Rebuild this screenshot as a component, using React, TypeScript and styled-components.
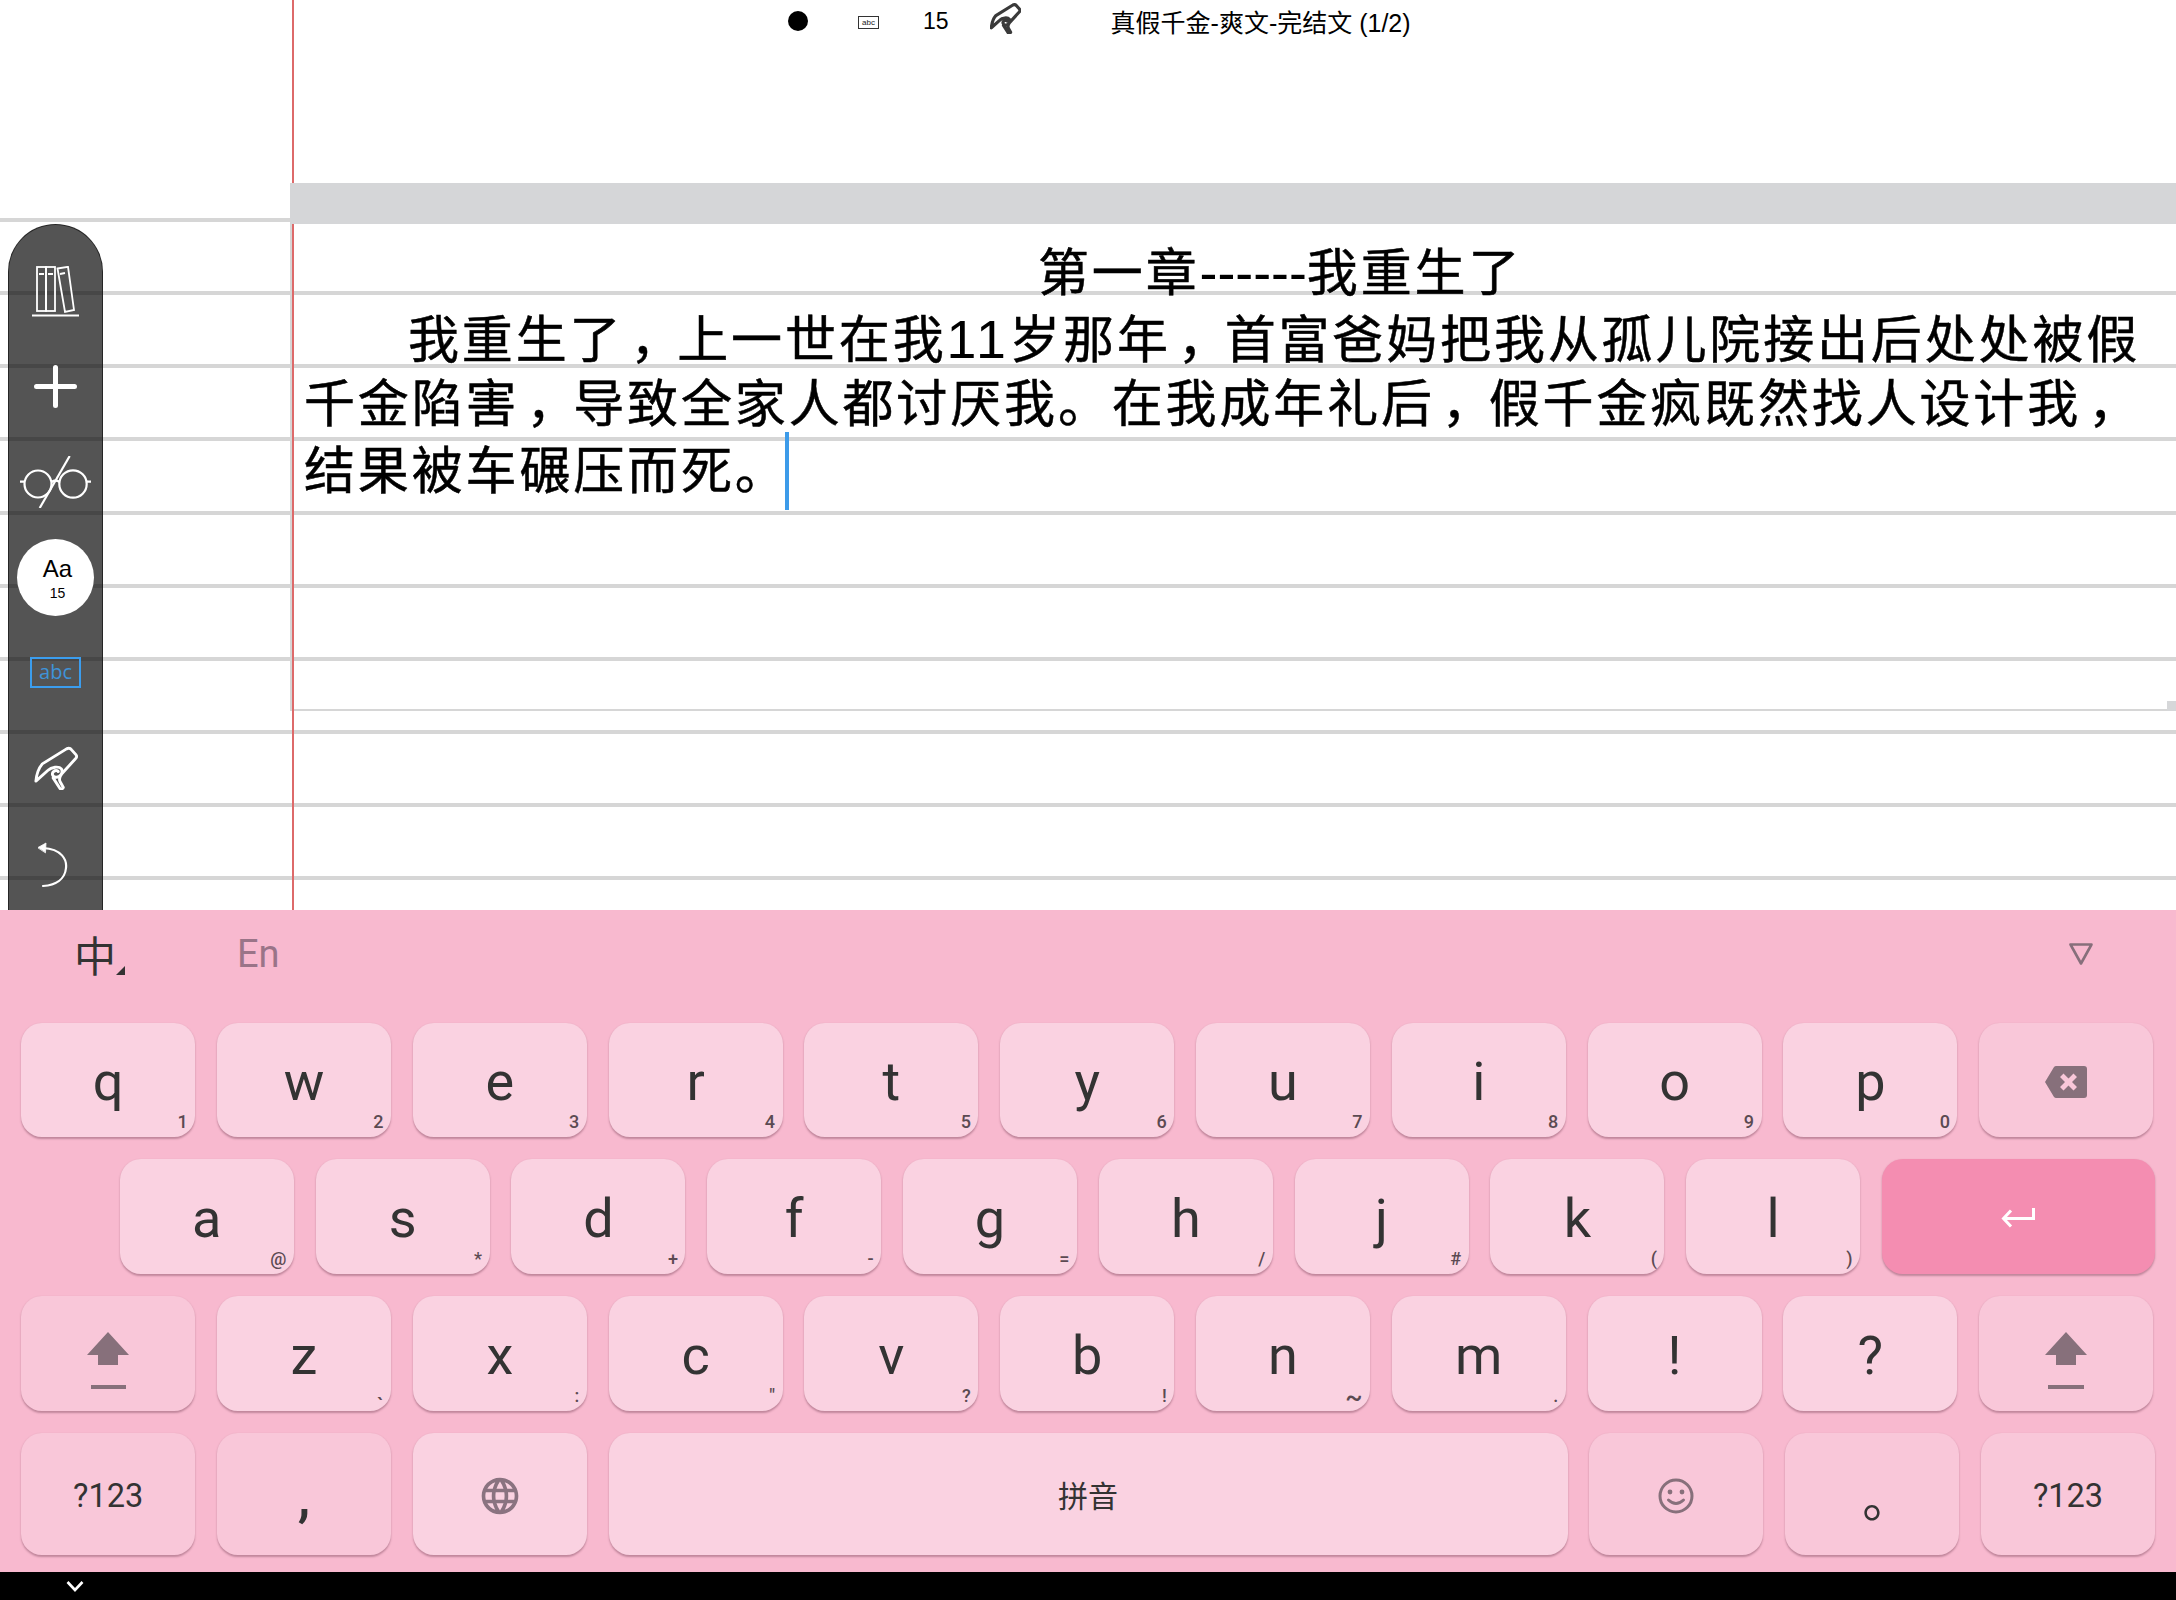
import React from "react";
import styled, { createGlobalStyle } from "styled-components";
import { MdLanguage } from "react-icons/md";

const Global = createGlobalStyle`
  html, body { margin: 0; padding: 0; background: #fff; }
  #root { width: 2176px; height: 1600px; overflow: hidden; }
`;

const Page = styled.div`
  width: 2176px;
  height: 1600px;
  display: flex;
  flex-direction: column;
  overflow: hidden;
`;

/* ---------- note pad ---------- */
const NotePad = styled.div`
  height: 910px;
  flex: none;
  display: grid;
  grid-template-columns: 292px 1fr;
  background-color: #fff;
  background-image: repeating-linear-gradient(
    to bottom,
    #d6d6d6 0,
    #d6d6d6 4px,
    transparent 4px,
    transparent 73.15px
  );
  background-position: 0 217.5px;
  background-repeat: no-repeat;
  background-size: 100% 700px;
`;

const LeftRail = styled.div`
  padding: 224px 0 0 8px;
`;

const Toolbar = styled.div`
  width: 95px;
  height: 686px;
  box-sizing: border-box;
  padding-top: 18.5px;
  background: rgba(0, 0, 0, 0.67);
  border: 1.5px solid rgba(30, 30, 30, 0.85);
  border-bottom: none;
  border-radius: 48px 48px 0 0;
  display: flex;
  flex-direction: column;
  align-items: center;
`;

const ToolSlot = styled.div`
  height: 95.3px;
  flex: none;
  display: flex;
  align-items: center;
  justify-content: center;
`;

const FontBadge = styled.div`
  width: 77px;
  height: 77px;
  border-radius: 50%;
  background: #fff;
  color: #000;
  font-family: "Liberation Sans", Arial, sans-serif;
  display: flex;
  flex-direction: column;
  align-items: center;
  justify-content: center;
  padding: 2px 0 0 4px;
  box-sizing: border-box;
`;

const BadgeTitle = styled.span`
  font-size: 24px;
  line-height: 26px;
`;

const BadgeSize = styled.span`
  font-size: 14px;
  line-height: 16px;
  margin-top: 3px;
`;

const AbcBox = styled.div`
  width: 51px;
  height: 31px;
  box-sizing: border-box;
  border: 2px solid #3b9dee;
  color: #3f93d8;
  font-family: "Open Sans", "Liberation Sans", sans-serif;
  font-size: 20px;
  line-height: 26px;
  text-align: center;
`;

const Sheet = styled.div`
  border-left: 2px solid #dd6a6a;
  display: flex;
  flex-direction: column;
  min-width: 0;
`;

const TopRow = styled.div`
  height: 44px;
  padding-left: 494px;
  display: flex;
  align-items: center;
  font-family: "Liberation Sans", "Noto Sans CJK SC", sans-serif;
  color: #000;
`;

const TopSpacer = styled.div`
  height: 139px;
`;

const Dot = styled.div`
  width: 20px;
  height: 20px;
  border-radius: 50%;
  background: #000;
  margin-top: -2px;
`;

const MiniAbc = styled.div`
  width: 21px;
  height: 13px;
  margin-left: 50px;
  box-sizing: border-box;
  border: 1px solid #333;
  font-size: 8px;
  line-height: 11px;
  text-align: center;
  color: #222;
`;

const TopNumber = styled.span`
  margin-left: 44px;
  font-size: 23px;
  margin-top: -1px;
`;

const TopHand = styled.svg`
  width: 31px;
  height: 31px;
  margin: -7px 0 0 41px;
  flex: none;
`;

const TopTitle = styled.span`
  margin-left: 90px;
  font-size: 25px;
  white-space: nowrap;
  margin-top: -3px;
`;

const Band = styled.div`
  height: 41px;
  margin-left: -4px;
  background: #d5d6d8;
  flex: none;
`;

const Paper = styled.div`
  position: relative;
  height: 487px;
  box-sizing: border-box;
  padding: 15px 0 0 10px;
  border-bottom: 2px solid #d6d6d6;
  font-family: "Liberation Sans", "Noto Sans CJK SC", sans-serif;
  font-size: 51px;
  letter-spacing: 2.85px;
  -webkit-text-stroke: 0.5px #000;
  color: #000;
  &::before {
    content: "";
    position: absolute;
    left: -4px;
    top: 0;
    bottom: -2px;
    width: 2px;
    background: #d6d6d6;
  }
`;

const TextLine = styled.div<{ $indent?: number }>`
  height: 66.5px;
  line-height: 66.5px;
  white-space: nowrap;
  padding-left: ${(p) => p.$indent ?? 0}px;
`;

const Digits = styled.span`
  font-size: 53.7px;
  letter-spacing: 3.5px;
  -webkit-text-stroke: 0;
`;

const Dashes = styled.span`
  font-size: 53.7px;
  letter-spacing: 0;
  -webkit-text-stroke: 0;
`;

const Comma = styled.span`
  display: inline-block;
  box-sizing: border-box;
  width: 53.85px;
  letter-spacing: 0;
  padding-right: 8px;
  text-align: center;
  font-feature-settings: "palt";
`;

const Caret = styled.span`
  display: inline-block;
  width: 4px;
  height: 78px;
  margin-left: -4px;
  background: #3d9be9;
  vertical-align: -21px;
  margin-top: -20px;
`;

const ScrollThumb = styled.div`
  position: absolute;
  right: 0;
  bottom: -2px;
  width: 9px;
  height: 10px;
  background: #d6d7d9;
`;

/* ---------- keyboard ---------- */
const Keyboard = styled.div`
  flex: none;
  height: 662px;
  box-sizing: border-box;
  background: #f8b9cf;
  font-family: Roboto, "Noto Sans CJK SC", sans-serif;
  color: #333;
`;

const Strip = styled.div`
  height: 88px;
  display: flex;
  align-items: center;
  padding: 0 83px 0 74px;
`;

const LangActive = styled.span`
  position: relative;
  font-family: "Noto Sans CJK SC", sans-serif;
  font-size: 42px;
  line-height: 48px;
  color: #333;
`;

const LangCorner = styled.i`
  position: absolute;
  right: -9px;
  bottom: 3px;
  border-style: solid;
  border-width: 0 0 9px 9px;
  border-color: transparent transparent #333 transparent;
`;

const LangOther = styled.span`
  margin-left: 121px;
  font-size: 38px;
  color: #9a7488;
  flex: 1;
`;

const Rows = styled.div`
  padding: 25px 21px 0 21.2px;
  display: flex;
  flex-direction: column;
  gap: 22px;
`;

const Row = styled.div<{ $inset?: number; $height: number }>`
  display: flex;
  gap: 21.8px;
  height: ${(p) => p.$height}px;
  padding-left: ${(p) => p.$inset ?? 0}px;
`;

type Tone = "light" | "mid" | "accent";

const Key = styled.div<{ $tone?: Tone; $wide?: boolean; $small?: boolean }>`
  position: relative;
  flex: ${(p) => (p.$wide ? "1 1 0" : "0 0 174px")};
  border-radius: 21px;
  display: flex;
  align-items: center;
  justify-content: center;
  padding-top: 3px;
  box-sizing: border-box;
  font-size: ${(p) => (p.$small ? 32.5 : 54)}px;
  background: ${(p) =>
    p.$tone === "accent" ? "#f48db1" : p.$tone === "mid" ? "#f9c7d9" : "#fad2e1"};
  box-shadow: 0 1.5px 2px rgba(90, 40, 60, 0.35);
`;

const Hint = styled.span<{ $size?: number; $drop?: number }>`
  position: absolute;
  right: 7.5px;
  bottom: 4px;
  font-size: ${(p) => p.$size ?? 18}px;
  line-height: 21.6px;
  font-weight: 500;
  color: #5b4a52;
  transform: translateY(${(p) => p.$drop ?? 0}px);
`;

const CommaMark = styled.span`
  font-size: 56px;
  font-weight: 500;
`;

const StopMark = styled.span`
  font-family: "Noto Sans CJK SC", sans-serif;
  font-size: 50px;
  line-height: 60px;
  width: 50px;
  margin-top: -2px;
  transform: translateX(15px);
`;

const SpaceLabel = styled.span`
  font-family: "Noto Sans CJK SC", sans-serif;
  font-size: 30px;
  color: #333;
  margin-top: -4px;
`;

const IconSvg = styled.svg`
  display: block;
  flex: none;
`;

const ShiftSvg = styled(IconSvg)`
  margin-top: 10px;
`;

const UndoSvg = styled(IconSvg)`
  margin: 5px 0 0 -6px;
`;

const GlobeWrap = styled.span`
  display: flex;
  color: #8a7380;
  font-size: 44px;
`;

const NavBar = styled.div`
  flex: none;
  height: 28px;
  background: #000;
  padding-left: 66px;
  display: flex;
  align-items: center;
`;

/* ---------- drawings ---------- */
const HAND =
  "M24 126 C26 102 34 84 44 72 L120 25 Q130 20 136 28 L150 44 Q154 50 148 56 L106 102 Q94 118 100 128 L110 146 Q106 153 100 150 L78 116 M24 126 L62 92 C72 82 96 78 104 88 C110 100 100 114 88 114 C76 114 72 102 80 96 C84 92 92 92 94 96";

const Books = () => (
  <IconSvg width="47" height="51" viewBox="0 0 47 51" fill="none" stroke="#fff" strokeWidth="1.8">
    <rect x="5" y="1" width="9" height="44" />
    <rect x="14" y="1" width="9" height="44" />
    <path d="M7 8h5M16 8h5M28 8l5-1" />
    <path d="M25.5 2.5 L36 0.8 L42 44 L33 46 Z" />
    <path d="M0 49.5H47" strokeWidth="2" />
  </IconSvg>
);

const Plus = () => (
  <IconSvg width="43" height="43" viewBox="0 0 43 43" fill="none" stroke="#fff" strokeWidth="5" strokeLinecap="round">
    <path d="M2.5 21.5H40.5M21.5 2.5V40.5" />
  </IconSvg>
);

const Glasses = () => (
  <IconSvg width="71" height="52" viewBox="0 0 71 52" fill="none" stroke="#fff" strokeWidth="2.2">
    <circle cx="18" cy="28" r="13.5" />
    <circle cx="53" cy="28" r="13.7" />
    <path d="M0 25.7H4.5M66.7 25.7H71M31.5 26Q35.5 23 39.5 26" />
    <path d="M49.7 0 L19.7 52" />
  </IconSvg>
);

const Hand = () => (
  <IconSvg width="44" height="44" viewBox="18 16 138 138" fill="none" stroke="#fff" strokeWidth="9" strokeLinejoin="round" strokeLinecap="round">
    <path d={HAND} />
  </IconSvg>
);

const Undo = () => (
  <UndoSvg width="30" height="46" viewBox="0 0 30 46" fill="none" stroke="#fff" strokeWidth="2.2" strokeLinecap="round">
    <path d="M5 6 C24 7 29 18 28 26 C27 37 18 43 5 44" />
    <path d="M0 5.5 L8 1 L7.5 10.5 Z" fill="#fff" strokeWidth="0.8" />
  </UndoSvg>
);

const Backspace = () => (
  <IconSvg width="42" height="32" viewBox="0 0 42 32">
    <path
      fill="#87707b"
      fillRule="evenodd"
      d="M11 0H39Q42 0 42 3V29Q42 32 39 32H11Q10 32 9 31L0 16L9 1Q10 0 11 0ZM18.5 7.5L15 11L20 16L15 21L18.5 24.5L23.5 19.5L28.5 24.5L32 21L27 16L32 11L28.5 7.5L23.5 12.5Z"
    />
  </IconSvg>
);

const Enter = () => (
  <IconSvg width="34" height="20" viewBox="0 0 34 20" fill="none" stroke="#fff" strokeWidth="3">
    <path d="M32.5 0V10.5H3" />
    <path d="M10 2.5L2.5 10.5L10 18.5" />
  </IconSvg>
);

const Shift = ({ wide }: { wide?: boolean }) => (
  <ShiftSvg width="42" height="57" viewBox="0 0 42 57" fill="#87707b">
    <path d="M21 0L42 23H31V33H11V23H0Z" />
    <rect x={wide ? 3 : 4} y="53" width={wide ? 36 : 35} height="4" />
  </ShiftSvg>
);

const Smile = () => (
  <IconSvg width="36" height="36" viewBox="0 0 36 36" fill="none" stroke="#87707b" strokeWidth="3">
    <circle cx="18" cy="18" r="16" />
    <circle cx="12" cy="14" r="2.4" fill="#87707b" stroke="none" />
    <circle cx="24" cy="14" r="2.4" fill="#87707b" stroke="none" />
    <path d="M10.5 22 Q18 29 25.5 22" strokeLinecap="round" />
  </IconSvg>
);

const Collapse = () => (
  <IconSvg width="24" height="22" viewBox="0 0 24 22" fill="none" stroke="#876f7b" strokeWidth="2.6" strokeLinejoin="round">
    <path d="M1.5 1.5H22.5L12 20.5Z" />
  </IconSvg>
);

const Chevron = () => (
  <IconSvg width="18" height="12" viewBox="0 0 18 12" fill="none" stroke="#fff" strokeWidth="2.6">
    <path d="M1.5 2L9 10L16.5 2" />
  </IconSvg>
);

const row1: [string, string][] = [
  ["q", "1"], ["w", "2"], ["e", "3"], ["r", "4"], ["t", "5"],
  ["y", "6"], ["u", "7"], ["i", "8"], ["o", "9"], ["p", "0"],
];
const row2: [string, string][] = [
  ["a", "@"], ["s", "*"], ["d", "+"], ["f", "-"], ["g", "="],
  ["h", "/"], ["j", "#"], ["k", "("], ["l", ")"],
];
const row3: [string, string][] = [
  ["z", "`"], ["x", ":"], ["c", '"'], ["v", "?"], ["b", "!"],
  ["n", "~"], ["m", "."], ["!", ""], ["?", ""],
];

const hintStyle: Record<string, { $size?: number; $drop?: number }> = {
  "`": { $drop: 10, $size: 20 },
  "~": { $size: 26, $drop: 2 },
};

const LetterKey = ({ label, hint }: { label: string; hint: string }) => (
  <Key>
    {label}
    {hint && <Hint {...hintStyle[hint]}>{hint}</Hint>}
  </Key>
);

export default function App() {
  return (
    <Page>
      <Global />
      <NotePad>
        <LeftRail>
          <Toolbar>
            <ToolSlot><Books /></ToolSlot>
            <ToolSlot><Plus /></ToolSlot>
            <ToolSlot><Glasses /></ToolSlot>
            <ToolSlot>
              <FontBadge>
                <BadgeTitle>Aa</BadgeTitle>
                <BadgeSize>15</BadgeSize>
              </FontBadge>
            </ToolSlot>
            <ToolSlot><AbcBox>abc</AbcBox></ToolSlot>
            <ToolSlot><Hand /></ToolSlot>
            <ToolSlot><Undo /></ToolSlot>
          </Toolbar>
        </LeftRail>
        <Sheet>
          <TopRow>
            <Dot />
            <MiniAbc>abc</MiniAbc>
            <TopNumber>15</TopNumber>
            <TopHand viewBox="18 16 138 138" fill="none" stroke="#3a3a3a" strokeWidth="14" strokeLinejoin="round" strokeLinecap="round">
              <path d={HAND} />
            </TopHand>
            <TopTitle>真假千金-爽文-完结文 (1/2)</TopTitle>
          </TopRow>
          <TopSpacer />
          <Band />
          <Paper>
            <TextLine $indent={734}>第一章<Dashes>------</Dashes>我重生了</TextLine>
            <TextLine $indent={104}>我重生了<Comma>，</Comma>上一世在我<Digits>11</Digits>岁那年<Comma>，</Comma>首富爸妈把我从孤儿院接出后处处被假</TextLine>
            <TextLine>千金陷害<Comma>，</Comma>导致全家人都讨厌我。在我成年礼后<Comma>，</Comma>假千金疯既然找人设计我<Comma>，</Comma></TextLine>
            <TextLine>结果被车碾压而死。<Caret /></TextLine>
            <ScrollThumb />
          </Paper>
        </Sheet>
      </NotePad>
      <Keyboard>
        <Strip>
          <LangActive>中<LangCorner /></LangActive>
          <LangOther>En</LangOther>
          <Collapse />
        </Strip>
        <Rows>
          <Row $height={114}>
            {row1.map(([l, h]) => <LetterKey key={l} label={l} hint={h} />)}
            <Key $tone="mid"><Backspace /></Key>
          </Row>
          <Row $height={115} $inset={98.6}>
            {row2.map(([l, h]) => <LetterKey key={l} label={l} hint={h} />)}
            <Key $tone="accent" $wide><Enter /></Key>
          </Row>
          <Row $height={115}>
            <Key $tone="mid"><Shift /></Key>
            {row3.map(([l, h]) => <LetterKey key={l} label={l} hint={h} />)}
            <Key $tone="mid"><Shift wide /></Key>
          </Row>
          <Row $height={122}>
            <Key $tone="mid" $small>?123</Key>
            <Key $tone="mid"><CommaMark>,</CommaMark></Key>
            <Key><GlobeWrap><MdLanguage /></GlobeWrap></Key>
            <Key $wide><SpaceLabel>拼音</SpaceLabel></Key>
            <Key $tone="mid"><Smile /></Key>
            <Key $tone="mid"><StopMark>。</StopMark></Key>
            <Key $tone="mid" $small>?123</Key>
          </Row>
        </Rows>
      </Keyboard>
      <NavBar><Chevron /></NavBar>
    </Page>
  );
}
